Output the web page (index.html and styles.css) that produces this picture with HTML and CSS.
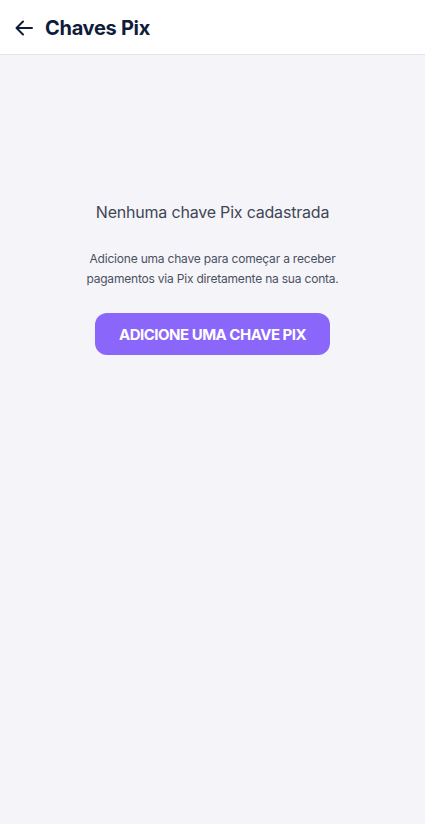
FILE: index.html
```html
<!DOCTYPE html>
<html>

<head>
  <meta charset="UTF-8" />
  <meta name="viewport" content="width=device-width,initial-scale=1,user-scalable=0" />
  <title>Chaves Pix</title>
  <link rel="stylesheet" href="styles.css">
</head>

<body>
  <header class="topbar">
    <button class="back" type="button" aria-label="Voltar">
      <svg width="18" height="16" viewBox="0 0 18 16" fill="none" stroke="currentColor" stroke-width="2" stroke-linecap="round" stroke-linejoin="round">
        <path d="M17 8H2" />
        <path d="M8 1.5L1.5 8L8 14.5" />
      </svg>
    </button>
    <h1>Chaves Pix</h1>
  </header>

  <main class="empty">
    <h2>Nenhuma chave Pix cadastrada</h2>
    <p>Adicione uma chave para começar a receber pagamentos via Pix diretamente na sua conta.</p>
    <button class="primary" type="button">ADICIONE UMA CHAVE PIX</button>
  </main>
</body>

</html>
```

FILE: styles.css
```css
html,
body {
  margin: 0;
  height: 100%;
}

body {
  background: #f5f5f9;
  font-family: Inter, "Noto Sans", sans-serif;
  display: flex;
  flex-direction: column;
}

.topbar {
  height: 55px;
  box-sizing: border-box;
  background: #fff;
  border-bottom: 1px solid #e4e4e8;
  display: flex;
  align-items: center;
  padding: 1px 14px 0 15px;
  gap: 12px;
}

.back {
  border: none;
  background: none;
  padding: 0;
  color: #0f1d3a;
  display: flex;
  cursor: pointer;
}

.topbar h1 {
  margin: 0;
  font-size: 20px;
  font-weight: 700;
  color: #0f1d3a;
  letter-spacing: -0.3px;
}

.empty {
  display: flex;
  flex-direction: column;
  align-items: center;
  text-align: center;
  padding: 147px 60px 0;
}

.empty h2 {
  margin: 0;
  font-size: 16px;
  font-weight: 400;
  color: #3f4656;
  letter-spacing: -0.2px;
}

.empty p {
  margin: 27px 0 0;
  font-size: 12px;
  line-height: 20px;
  color: #4a5162;
  letter-spacing: -0.2px;
}

.primary {
  margin-top: 24px;
  width: 235px;
  height: 42px;
  border: none;
  border-radius: 12px;
  background: #8b66fb;
  color: #fff;
  font-family: Inter, "Noto Sans", sans-serif;
  font-size: 15px;
  font-weight: 700;
  letter-spacing: -0.5px;
  cursor: pointer;
}
```
